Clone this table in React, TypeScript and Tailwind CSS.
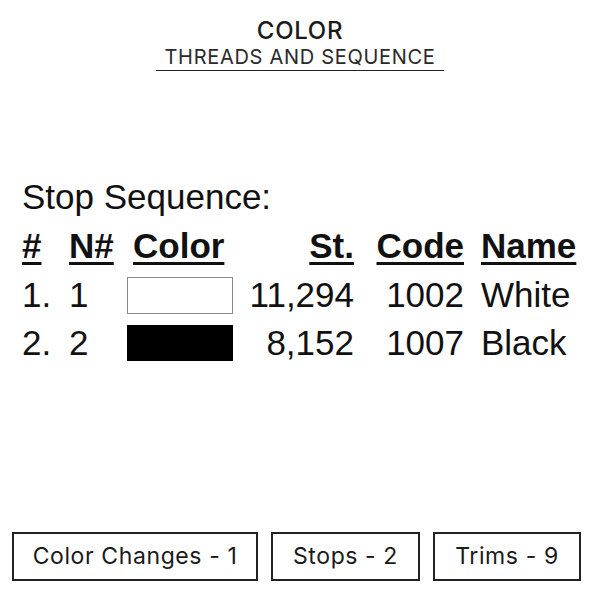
const rows = [
  { idx: "1.", n: "1", swatch: "white", st: "11,294", code: "1002", name: "White" },
  { idx: "2.", n: "2", swatch: "black", st: "8,152", code: "1007", name: "Black" },
];

const arial = { fontFamily: '"Liberation Sans", Arial, sans-serif' };
const sans = { fontFamily: "Inter, sans-serif" };

const headCls = "text-[35px] leading-[50px] font-bold underline decoration-[3px] underline-offset-[4px]";
const cellCls = "text-[35px] leading-[48px]";

export default function App() {
  return (
    <div className="w-[600px] h-[600px] bg-white flex flex-col text-[#111]">
      {/* Title */}
      <div className="flex flex-col items-center pt-[16px]" style={sans}>
        <div className="text-[24px] font-medium leading-[29px] tracking-[0.7px] text-[#1a1a1a]">COLOR</div>
        <div className="text-[20px] leading-[24px] tracking-[0.7px] text-[#2a2a2a] px-[8px] border-b-[1.5px] border-[#222] pb-[1px]">
          THREADS AND SEQUENCE
        </div>
      </div>

      {/* Stop sequence table */}
      <div className="pl-[22px] pt-[102px]" style={arial}>
        <div className={cellCls}>Stop Sequence:</div>
        <div className="grid grid-cols-[47px_58px_106px_121px_110px_1fr] items-center">
          <div className={headCls}>#</div>
          <div className={headCls}>N#</div>
          <div className={headCls + " pl-[6px]"}>Color</div>
          <div className={headCls + " text-right"}>St.</div>
          <div className={headCls + " text-right"}>Code</div>
          <div className={headCls + " pl-[17px]"}>Name</div>
          {rows.map((r) => [
            <div key={r.idx + "a"} className={cellCls}>{r.idx}</div>,
            <div key={r.idx + "b"} className={cellCls}>{r.n}</div>,
            <div key={r.idx + "c"} className="h-[48px] flex items-center">
              {r.swatch === "white" ? (
                <div className="w-[106px] h-[37px] bg-white border-[1.5px] border-[#8a8a8a]" />
              ) : (
                <div className="w-[106px] h-[36px] bg-black" />
              )}
            </div>,
            <div key={r.idx + "d"} className={cellCls + " text-right"}>{r.st}</div>,
            <div key={r.idx + "e"} className={cellCls + " text-right"}>{r.code}</div>,
            <div key={r.idx + "f"} className={cellCls + " pl-[17px]"}>{r.name}</div>,
          ])}
        </div>
      </div>

      {/* Summary boxes */}
      <div className="mt-auto mb-[19px] flex gap-[13px] pl-[12px]" style={sans}>
        <div className="w-[246px] h-[49px] border-2 border-[#222] flex items-center justify-center text-[23px] tracking-[0.6px] text-[#1a1a1a]">
          Color Changes - 1
        </div>
        <div className="w-[149px] h-[49px] border-2 border-[#222] flex items-center justify-center text-[23px] tracking-[0.6px] text-[#1a1a1a]">
          Stops - 2
        </div>
        <div className="w-[148px] h-[49px] border-2 border-[#222] flex items-center justify-center text-[23px] tracking-[0.6px] text-[#1a1a1a]">
          Trims - 9
        </div>
      </div>
    </div>
  );
}
